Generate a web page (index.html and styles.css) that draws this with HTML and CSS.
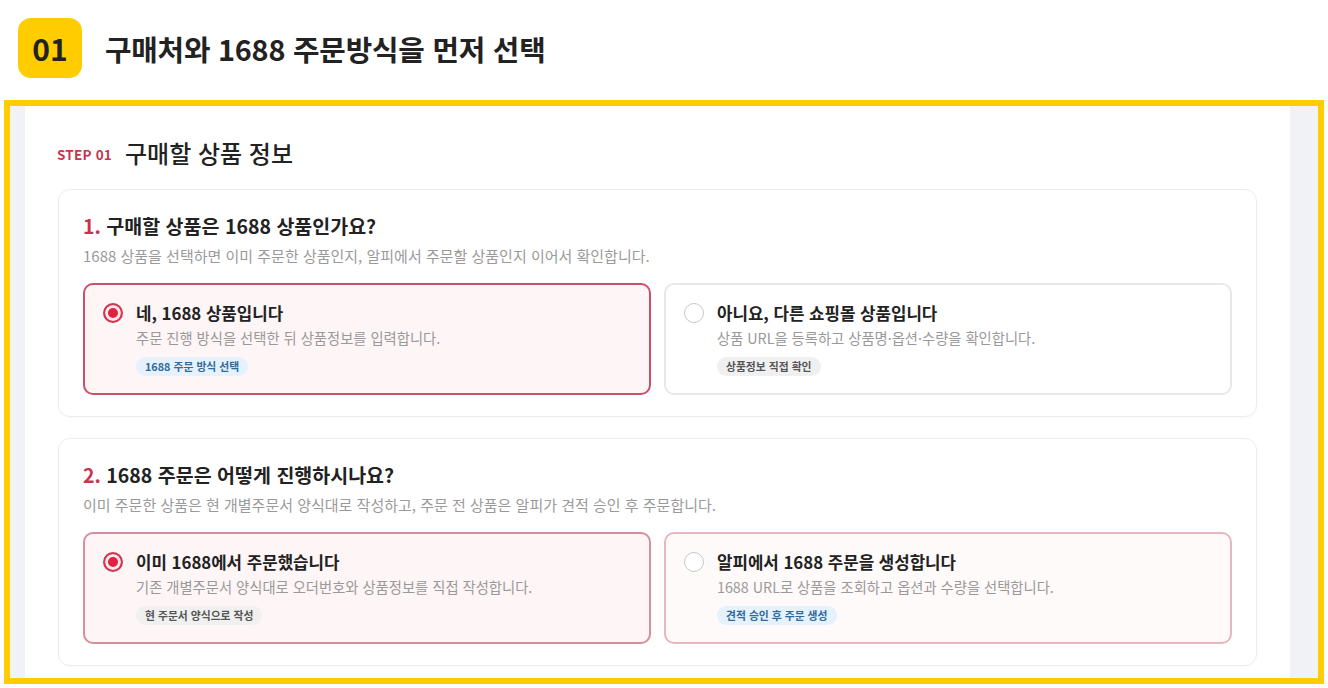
FILE: index.html
```html
<!DOCTYPE html>
<html lang="ko">
<head>
  <meta charset="UTF-8">
  <meta name="viewport" content="width=device-width, initial-scale=1.0">
  <title>구매처와 1688 주문방식 선택</title>
  <link rel="stylesheet" href="styles.css">
</head>
<body>
  <header class="guide-head">
    <span class="guide-num">01</span>
    <h1>구매처와 1688 주문방식을 먼저 선택</h1>
  </header>

  <div class="shot">
    <div class="side-left"></div>
    <main class="panel">
      <h2 class="step-title"><span class="step">STEP 01</span>구매할 상품 정보</h2>

      <section class="card">
        <h3><em>1.</em> 구매할 상품은 1688 상품인가요?</h3>
        <p class="hint">1688 상품을 선택하면 이미 주문한 상품인지, 알피에서 주문할 상품인지 이어서 확인합니다.</p>
        <div class="options">
          <label class="option selected">
            <span class="radio on"></span>
            <span class="body">
              <strong>네, 1688 상품입니다</strong>
              <span class="desc">주문 진행 방식을 선택한 뒤 상품정보를 입력합니다.</span>
              <span class="tag blue">1688 주문 방식 선택</span>
            </span>
          </label>
          <label class="option">
            <span class="radio"></span>
            <span class="body">
              <strong>아니요, 다른 쇼핑몰 상품입니다</strong>
              <span class="desc">상품 URL을 등록하고 상품명·옵션·수량을 확인합니다.</span>
              <span class="tag gray">상품정보 직접 확인</span>
            </span>
          </label>
        </div>
      </section>

      <section class="card">
        <h3><em>2.</em> 1688 주문은 어떻게 진행하시나요?</h3>
        <p class="hint">이미 주문한 상품은 현 개별주문서 양식대로 작성하고, 주문 전 상품은 알피가 견적 승인 후 주문합니다.</p>
        <div class="options">
          <label class="option selected soft">
            <span class="radio on"></span>
            <span class="body">
              <strong>이미 1688에서 주문했습니다</strong>
              <span class="desc">기존 개별주문서 양식대로 오더번호와 상품정보를 직접 작성합니다.</span>
              <span class="tag gray">현 주문서 양식으로 작성</span>
            </span>
          </label>
          <label class="option pink">
            <span class="radio"></span>
            <span class="body">
              <strong>알피에서 1688 주문을 생성합니다</strong>
              <span class="desc">1688 URL로 상품을 조회하고 옵션과 수량을 선택합니다.</span>
              <span class="tag blue">견적 승인 후 주문 생성</span>
            </span>
          </label>
        </div>
      </section>
    </main>
    <div class="side-right"></div>
  </div>
</body>
</html>
```

FILE: styles.css
```css
* {
  margin: 0;
  padding: 0;
  box-sizing: border-box;
}

html, body {
  width: 100%;
  height: 100%;
  overflow: hidden;
}

body {
  background-color: #fff;
  color: #222;
  font-family: "Noto Sans CJK KR", "Noto Sans", sans-serif;
}

.guide-head {
  display: flex;
  align-items: center;
  gap: 23px;
  padding: 18px 0 0 18px;
}

.guide-num {
  display: flex;
  justify-content: center;
  align-items: center;
  width: 64px;
  height: 60px;
  border-radius: 13px;
  background-color: #ffcc00;
  font-size: 30px;
  font-weight: bold;
  color: #222;
}

.guide-head h1 {
  font-size: 28.8px;
  font-weight: bold;
  letter-spacing: -0.2px;
  color: #222;
}

.shot {
  display: flex;
  height: 584px;
  margin: 22px 4px 0 4px;
  border: 6px solid #ffcc00;
  background-color: #f1f2f5;
  overflow: hidden;
}

.side-left {
  width: 15px;
  flex-shrink: 0;
}

.side-right {
  width: 28px;
  flex-shrink: 0;
}

.panel {
  flex: 1;
  padding: 31px 33px 0 33px;
  background-color: #fff;
}

.step-title {
  display: flex;
  align-items: center;
  height: 30px;
  font-size: 24px;
  font-weight: 500;
  color: #222;
}

.step {
  margin: 4px 13px 0 -1px;
  font-size: 13.5px;
  font-weight: bold;
  color: #c8344e;
  letter-spacing: 0.2px;
}

.card {
  margin-top: 22px;
  padding: 22px 24px 21px;
  border: 1px solid #ececec;
  border-radius: 12px;
  box-shadow: 0 1px 3px rgba(0, 0, 0, .03);
}

.card + .card {
  margin-top: 21px;
}

.card h3 {
  font-size: 19.5px;
  line-height: 28px;
  font-weight: bold;
  color: #222;
}

.card h3 em {
  font-style: normal;
  color: #c8344e;
}

.hint {
  margin-top: 6px;
  font-size: 15px;
  line-height: 20px;
  color: #9a9a9a;
}

.options {
  display: grid;
  grid-template-columns: 1fr 1fr;
  gap: 13px;
  margin-top: 17px;
}

.option {
  display: flex;
  align-items: flex-start;
  gap: 13px;
  height: 112px;
  padding: 17px 20px 0 18px;
  border: 2px solid #e8e8e8;
  border-radius: 10px;
  background-color: #fff;
  cursor: pointer;
}

.option.selected {
  border-color: #c9506a;
  background-color: #fdf5f6;
}

.option.soft {
  border-color: #d58e9d;
}

.option.pink {
  border-color: #e8b7c1;
  background-color: #fffafa;
}

.radio {
  flex-shrink: 0;
  width: 20px;
  height: 20px;
  margin-top: 1px;
  border: 1.5px solid #c8c8c8;
  border-radius: 50%;
  background-color: #fff;
}

.radio.on {
  border: 2px solid #cf3650;
  background-color: #e0223f;
  box-shadow: inset 0 0 0 3px #fbe9ec;
}

.body {
  display: flex;
  flex-direction: column;
  align-items: flex-start;
}

.body strong {
  font-size: 16.8px;
  line-height: 22px;
  font-weight: bold;
  color: #222;
}

.desc {
  margin-top: 4px;
  font-size: 14.3px;
  line-height: 20px;
  color: #999;
}

.tag {
  margin-top: 9px;
  padding: 0 9px;
  height: 19px;
  line-height: 19px;
  border-radius: 10px;
  font-size: 10.8px;
  font-weight: bold;
}

.tag.blue {
  background-color: #e5f1fb;
  color: #2f6b9c;
}

.tag.gray {
  background-color: #f0f0f0;
  color: #555;
}
```
